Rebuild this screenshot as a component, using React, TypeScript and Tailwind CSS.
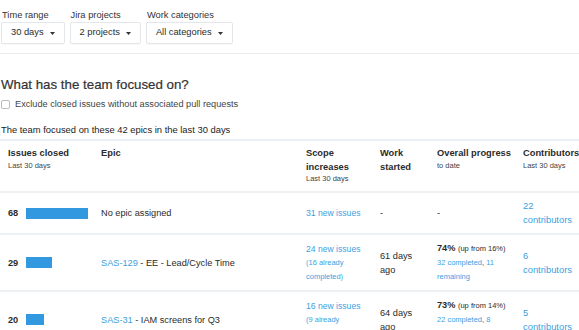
import React from "react";

type Row = {
  closed: number;
  epicKey?: string;
  epicName: string;
  scopeNew: string;
  scopeDone?: string;
  started?: string;
  pct?: string;
  upFrom?: string;
  completed?: string;
  remainingCount?: string;
  contributors: string;
};

const rows: Row[] = [
  {
    closed: 68,
    epicName: "No epic assigned",
    scopeNew: "31 new issues",
    contributors: "22",
  },
  {
    closed: 29,
    epicKey: "SAS-129",
    epicName: "EE - Lead/Cycle Time",
    scopeNew: "24 new issues",
    scopeDone: "(16 already completed)",
    started: "61 days ago",
    pct: "74%",
    upFrom: "(up from 16%)",
    completed: "32 completed",
    remainingCount: "11",
    contributors: "6",
  },
  {
    closed: 20,
    epicKey: "SAS-31",
    epicName: "IAM screens for Q3",
    scopeNew: "16 new issues",
    scopeDone: "(9 already completed)",
    started: "64 days ago",
    pct: "73%",
    upFrom: "(up from 14%)",
    completed: "22 completed",
    remainingCount: "8",
    contributors: "5",
  },
];

const maxClosed = 68;
const grid = "grid grid-cols-[93px_205px_74px_57px_86px_64px]";

function Caret() {
  return (
    <svg width="5" height="3" viewBox="0 0 5 3" className="shrink-0">
      <path d="M0 0 L5 0 L2.5 3 Z" fill="#333" />
    </svg>
  );
}

function Filter({ label, value }: { label: string; value: string }) {
  return (
    <div className="flex flex-col">
      <span className="text-[9.3px] leading-[14px] pl-[1px] text-[#333]">{label}</span>
      <button className="h-[22px] px-[9px] flex items-center gap-[6px] border border-[#e4e7ea] rounded-[2px] bg-white text-[9.3px] text-[#2b2b2b] shadow-[0_1px_1px_rgba(0,0,0,0.03)]">
        {value}
        <Caret />
      </button>
    </div>
  );
}

function HeadCell({ title, sub }: { title: string; sub?: string }) {
  return (
    <div className="pl-2">
      <div className="font-bold text-[9.3px] leading-[13.5px] text-[#2b2b2b]">{title}</div>
      {sub && <div className="text-[7.5px] leading-[10px] text-[#444]">{sub}</div>}
    </div>
  );
}

export default function App() {
  return (
    <div className="w-[579px] h-[330px] overflow-hidden bg-white text-[#2b2b2b] font-['Liberation_Sans',Arial,sans-serif]">
      <div className="flex gap-[5px] pt-[8px] pl-[1px]">
        <Filter label="Time range" value="30 days" />
        <Filter label="Jira projects" value="2 projects" />
        <Filter label="Work categories" value="All categories" />
      </div>
      <div className="mt-[9px] border-t border-[#e9ecef]" />

      <h2 className="mt-[22px] text-[13.3px] leading-[18px] text-[#333] pl-[1px] [-webkit-text-stroke:0.2px_#333]">
        What has the team focused on?
      </h2>
      <label className="mt-[3px] flex items-center gap-[5px] pl-[1px] text-[9.2px] leading-[14px] text-[#444]">
        <span className="w-[9px] h-[9px] rounded-[2px] border border-[#b9bcc0] bg-white" />
        Exclude closed issues without associated pull requests
      </label>
      <p className="mt-[12px] text-[9.4px] leading-[14px] text-[#222] pl-[1px]">
        The team focused on these 42 epics in the last 30 days
      </p>

      <div className="mt-[2px] border-t-2 border-[#eef1f4]">
        <div className={`${grid} items-start pt-[6px] pb-[7px] border-b-2 border-[#eef1f4]`}>
          <HeadCell title="Issues closed" sub="Last 30 days" />
          <HeadCell title="Epic" />
          <HeadCell title="Scope increases" sub="Last 30 days" />
          <HeadCell title="Work started" />
          <HeadCell title="Overall progress" sub="to date" />
          <HeadCell title="Contributors" sub="Last 30 days" />
        </div>

        {rows.map((r) => (
          <div
            key={r.closed}
            className={`${grid} items-center py-[6px] border-b-2 border-[#eef1f4] text-[9.2px] leading-[14px]`}
          >
            <div className="pl-2 flex items-center gap-[8px]">
              <span className="font-bold w-[10px]">{r.closed}</span>
              <span
                className="h-[11px] bg-[#3299e0]"
                style={{ width: `${(r.closed / maxClosed) * 62}px` }}
              />
            </div>
            <div className="pl-2">
              {r.epicKey ? (
                <>
                  <span className="text-[#3a9fe2]">{r.epicKey}</span> - {r.epicName}
                </>
              ) : (
                r.epicName
              )}
            </div>
            <div className="pl-2 pr-[2px] text-[#3a9fe2]">
              <div className="text-[8.6px]">{r.scopeNew}</div>
              {r.scopeDone && <div className="text-[7.5px]">{r.scopeDone}</div>}
            </div>
            <div className="pl-2">{r.started ?? "-"}</div>
            <div className="pl-2">
              {r.pct ? (
                <>
                  <div>
                    <span className="font-bold">{r.pct}</span>{" "}
                    <span className="text-[7.5px]">{r.upFrom}</span>
                  </div>
                  <div className="text-[7.5px]">
                    <span className="text-[#3a9fe2]">{r.completed}</span>,{" "}
                    <span className="text-[#3a9fe2]">{r.remainingCount}</span>
                  </div>
                  <div className="text-[7.5px] text-[#3a9fe2]">remaining</div>
                </>
              ) : (
                "-"
              )}
            </div>
            <div className="pl-2 text-[#3a9fe2] text-[9.4px]">
              <div>{r.contributors}</div>
              <div>contributors</div>
            </div>
          </div>
        ))}
      </div>
    </div>
  );
}
